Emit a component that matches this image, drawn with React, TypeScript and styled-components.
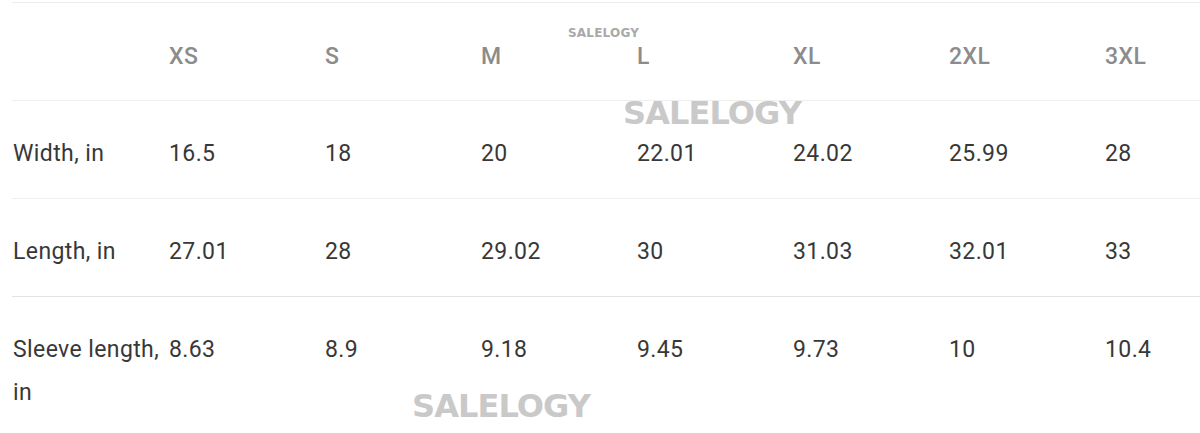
import React from "react";
import styled, { createGlobalStyle } from "styled-components";

const GlobalStyle = createGlobalStyle`
	html, body {
		margin: 0;
		padding: 0;
		background: #fff;
		overflow: hidden;
	}
	body {
		font-family: Roboto, "Liberation Sans", sans-serif;
	}
`;

const Page = styled.div`
	position: relative;
	width: 1200px;
	height: 433px;
	overflow: hidden;
	padding-left: 12px;
	box-sizing: border-box;
`;

const Table = styled.table`
	border-collapse: collapse;
	table-layout: fixed;
	width: 1248px;
	margin-top: 2px;
	border-top: 1px solid #ececec;
`;

const Row = styled.tr<{ $strong?: boolean }>`
	border-bottom: 1px solid ${({ $strong }) => ($strong ? "#e2e2e2" : "#efefef")};
`;

const Cell = styled.td<{ $head?: boolean }>`
	width: 156px;
	padding: ${({ $head }) => ($head ? "32px 2px 22px 1px" : "31px 2px 23px 1px")};
	vertical-align: top;
	text-align: left;
	font-size: 23px;
	letter-spacing: 0.4px;
	line-height: 43px;
	font-weight: ${({ $head }) => ($head ? 500 : 400)};
	color: ${({ $head }) => ($head ? "#8c8c8c" : "#383838")};
	box-sizing: border-box;
`;

const Mark = styled.span<{ $small?: boolean }>`
	position: absolute;
	font-family: "DejaVu Sans", Roboto, sans-serif;
	font-weight: 700;
	font-size: ${({ $small }) => ($small ? "12px" : "32px")};
	letter-spacing: ${({ $small }) => ($small ? "0.2px" : "-0.9px")};
	color: ${({ $small }) => ($small ? "#a9a9a9" : "#c9c9c9")};
	line-height: 1;
	pointer-events: none;
`;

const sizes = ["XS", "S", "M", "L", "XL", "2XL", "3XL"];

const rows = [
	{ label: "Width, in", values: ["16.5", "18", "20", "22.01", "24.02", "25.99", "28"] },
	{ label: "Length, in", values: ["27.01", "28", "29.02", "30", "31.03", "32.01", "33"] },
	{ label: "Sleeve length, in", values: ["8.63", "8.9", "9.18", "9.45", "9.73", "10", "10.4"] },
];

export default function App() {
	return (
		<>
			<GlobalStyle />
			<Page>
				<Table>
					<tbody>
						<Row>
							<Cell $head />
							{sizes.map((s) => (
								<Cell $head key={s}>
									{s}
								</Cell>
							))}
						</Row>
						{rows.map((r, i) => (
							<Row key={r.label} $strong={i === 1}>
								<Cell>{r.label}</Cell>
								{r.values.map((v, j) => (
									<Cell key={j}>{v}</Cell>
								))}
							</Row>
						))}
					</tbody>
				</Table>
				<Mark $small style={{ left: 568, top: 27 }}>SALELOGY</Mark>
				<Mark style={{ left: 623, top: 97 }}>SALELOGY</Mark>
				<Mark style={{ left: 412, top: 390 }}>SALELOGY</Mark>
			</Page>
		</>
	);
}
